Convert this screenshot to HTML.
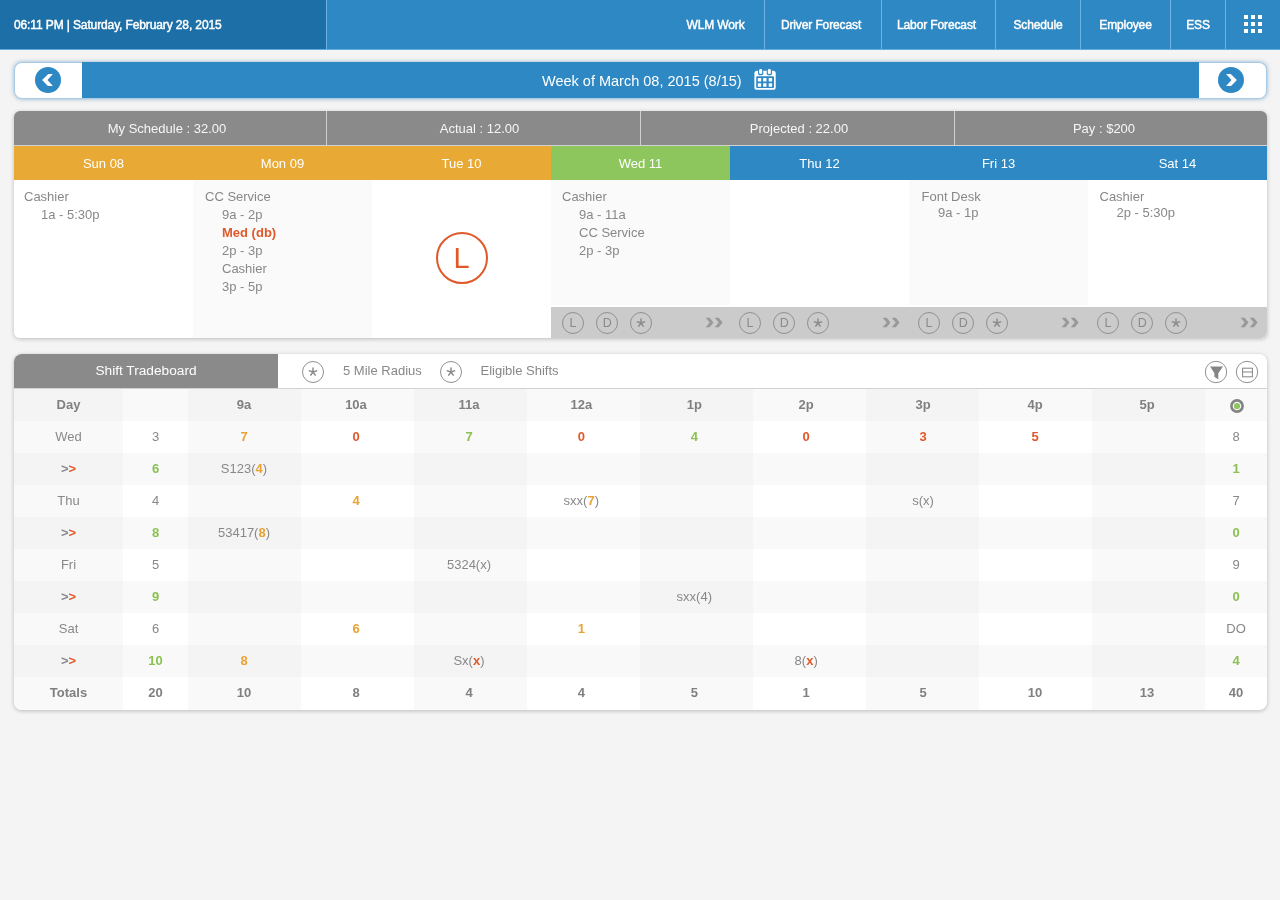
<!DOCTYPE html>
<html><head><meta charset="utf-8">
<style>
*{margin:0;padding:0;box-sizing:border-box}
html,body{width:1280px;height:900px;overflow:hidden;background:#f4f4f4;font-family:"Liberation Sans",sans-serif;font-size:13px;color:#888}
.a{position:absolute}
#hdr{left:0;top:0;width:1280px;height:50px;background:#2e88c4;border-bottom:1px solid #62ace0}
#hdrl{left:0;top:0;width:326px;height:49px;background:#1c6fa7;color:#fff;font-size:12px;line-height:51px;padding-left:14px;letter-spacing:-0.12px;-webkit-text-stroke:0.45px #fff}
.sep{top:0;width:1px;height:49px;background:#6db3e3}
.nav{top:0;height:49px;line-height:51px;color:#fff;font-size:12px;text-align:center;-webkit-text-stroke:0.45px #fff;letter-spacing:-0.12px}
#week{left:14px;top:61.5px;width:1253px;height:37px;background:#fff;border:1px solid #a9cbe6;border-radius:8px;box-shadow:0 0 4px rgba(40,110,170,.5)}
#weekc{left:82px;top:62px;width:1117px;height:36px;background:#2e88c4;color:#fff;font-size:14.5px;line-height:37px}
#sched{left:14px;top:111px;width:1253px;height:227px;background:#fff;border-radius:6px;box-shadow:0 1px 4px rgba(0,0,0,.24);overflow:hidden}
.sum{top:0;height:34px;line-height:34px;background:#8a8a8a;color:#f6f6f6;text-align:center}
.st{top:0;width:200px;height:34px;line-height:36px;color:#f6f6f6;text-align:center}
.dh{top:35px;height:34px;line-height:36px;color:#fff;text-align:center;width:179px}
.dc{top:69px;height:158px;width:179px}
.ln{position:absolute;white-space:nowrap;line-height:18px;margin-top:1px}
#trade{left:14px;top:354px;width:1253px;height:356px;background:#fff;border-radius:8px;box-shadow:0 1px 4px rgba(0,0,0,.24);overflow:hidden}
.row{position:absolute;left:0;width:1253px;height:32px}
.cell{position:absolute;top:0;height:32px;line-height:32px;text-align:center;white-space:nowrap}
.o{color:#e8a333;font-weight:bold}
.r{color:#e0592a;font-weight:bold}
.g{color:#8cc152;font-weight:bold}
.b{font-weight:bold;color:#808080}
</style></head><body><div style="position:absolute;left:0;top:0;width:1280px;height:900px;will-change:transform">
<div id="hdr" class="a"></div>
<div id="hdrl" class="a">06:11 PM | Saturday, February 28, 2015</div>
<div class="a sep" style="left:326px"></div>
<div class="a nav" style="left:667px;width:97px">WLM Work</div>
<div class="a sep" style="left:764px"></div>
<div class="a nav" style="left:763px;width:116px">Driver Forecast</div>
<div class="a sep" style="left:881px"></div>
<div class="a nav" style="left:880px;width:113px">Labor Forecast</div>
<div class="a sep" style="left:995px"></div>
<div class="a nav" style="left:996px;width:84px">Schedule</div>
<div class="a sep" style="left:1080px"></div>
<div class="a nav" style="left:1081px;width:89px">Employee</div>
<div class="a sep" style="left:1170px"></div>
<div class="a nav" style="left:1171px;width:54px">ESS</div>
<div class="a sep" style="left:1225px"></div>
<svg class="a" style="left:1244px;top:15px" width="18" height="18" viewBox="0 0 18 18"><g fill="#fff"><rect x="0" y="0" width="4" height="4"/><rect x="7" y="0" width="4" height="4"/><rect x="14" y="0" width="4" height="4"/><rect x="0" y="7" width="4" height="4"/><rect x="7" y="7" width="4" height="4"/><rect x="14" y="7" width="4" height="4"/><rect x="0" y="14" width="4" height="4"/><rect x="7" y="14" width="4" height="4"/><rect x="14" y="14" width="4" height="4"/></g></svg>

<div id="week" class="a"></div>
<div id="weekc" class="a"><span class="a" style="left:460px;top:1px">Week of March 08, 2015 (8/15)</span></div>
<svg class="a" style="left:35.3px;top:67.3px" width="26" height="26" viewBox="0 0 26 26"><circle cx="13" cy="13" r="13" fill="#2e88c4"/><polygon points="13.3,7.1 17.9,7.1 12.5,13 17.9,18.9 12.9,18.9 7.1,13" fill="#fff"/></svg>
<svg class="a" style="left:1218px;top:67px" width="26" height="26" viewBox="0 0 26 26"><circle cx="13" cy="13" r="13" fill="#2e88c4"/><polygon points="12.7,7.1 8.1,7.1 13.5,13 8.1,18.9 13.1,18.9 18.9,13" fill="#fff"/></svg>
<svg class="a" style="left:754px;top:68px" width="22" height="22" viewBox="0 0 22 22">
<rect x="0.4" y="2.7" width="21.3" height="19.1" rx="2.6" fill="#fff"/>
<rect x="4" y="0" width="5.3" height="7.2" rx="1.6" fill="#2e88c4"/><rect x="12.7" y="0" width="5.3" height="7.2" rx="1.6" fill="#2e88c4"/>
<rect x="5.1" y="1" width="3.1" height="5.1" rx="1.4" fill="#fff"/><rect x="13.8" y="1" width="3.1" height="5.1" rx="1.4" fill="#fff"/>
<rect x="2.2" y="8.2" width="17.8" height="11.8" rx="1" fill="#2e88c4"/>
<g fill="#fff"><rect x="3.8" y="10" width="3.4" height="3.4" rx=".5"/><rect x="9.1" y="10" width="3.4" height="3.4" rx=".5"/><rect x="14.7" y="10" width="3.4" height="3.4" rx=".5"/>
<rect x="3.8" y="15.3" width="3.4" height="3.4" rx=".5"/><rect x="9.1" y="15.3" width="3.4" height="3.4" rx=".5"/><rect x="14.7" y="15.3" width="3.4" height="3.4" rx=".5"/></g></svg>

<div id="sched" class="a">
  <div class="a" style="left:0;top:34px;width:1253px;height:1px;background:#d2d2d2"></div>
  <div class="a sum" style="left:0;width:1253px"></div>
  <div class="a" style="left:312px;top:0;width:1px;height:34px;background:#d0d0d0"></div>
  <div class="a" style="left:626px;top:0;width:1px;height:34px;background:#d0d0d0"></div>
  <div class="a" style="left:940px;top:0;width:1px;height:34px;background:#d0d0d0"></div>
  <div class="a st" style="left:53px">My Schedule : 32.00</div>
  <div class="a st" style="left:365.5px">Actual : 12.00</div>
  <div class="a st" style="left:685px">Projected : 22.00</div>
  <div class="a st" style="left:990px">Pay : $200</div>

  <div class="a dh" style="left:0;background:#e8a935">Sun 08</div>
  <div class="a dh" style="left:179px;background:#e8a935">Mon 09</div>
  <div class="a dh" style="left:358px;background:#e8a935">Tue 10</div>
  <div class="a dh" style="left:537px;background:#8cc65d">Wed 11</div>
  <div class="a dh" style="left:716px;background:#2e88c4">Thu 12</div>
  <div class="a dh" style="left:895px;background:#2e88c4">Fri 13</div>
  <div class="a dh" style="left:1074px;background:#2e88c4">Sat 14</div>

  <div class="a dc" style="left:0;background:#fff">
    <div class="ln" style="left:10px;top:7px">Cashier</div>
    <div class="ln" style="left:27px;top:25px">1a - 5:30p</div>
  </div>
  <div class="a dc" style="left:179px;background:#fafafa">
    <div class="ln" style="left:12px;top:7px">CC Service</div>
    <div class="ln" style="left:29px;top:25px">9a - 2p</div>
    <div class="ln" style="left:29px;top:43px;color:#e0592a;font-weight:bold">Med (db)</div>
    <div class="ln" style="left:29px;top:61px">2p - 3p</div>
    <div class="ln" style="left:29px;top:79px">Cashier</div>
    <div class="ln" style="left:29px;top:97px">3p - 5p</div>
  </div>
  <div class="a dc" style="left:358px;background:#fff">
    <div class="a" style="left:63.5px;top:52px;width:52px;height:52px;border:2px solid #e0592a;border-radius:50%;color:#e0592a;font-size:29px;line-height:48px;text-align:center">L</div>
  </div>
  <div class="a dc" style="left:537px;background:#fafafa">
    <div class="ln" style="left:11px;top:7px">Cashier</div>
    <div class="ln" style="left:28px;top:25px">9a - 11a</div>
    <div class="ln" style="left:28px;top:43px">CC Service</div>
    <div class="ln" style="left:28px;top:61px">2p - 3p</div>
  </div>
  <div class="a dc" style="left:716px;background:#fff"></div>
  <div class="a dc" style="left:895px;background:#fafafa">
    <div class="ln" style="left:12.5px;top:7px">Font Desk</div>
    <div class="ln" style="left:29px;top:23px">9a - 1p</div>
  </div>
  <div class="a dc" style="left:1074px;background:#fff">
    <div class="ln" style="left:11.5px;top:7px">Cashier</div>
    <div class="ln" style="left:28.5px;top:23px">2p - 5:30p</div>
  </div>
  <div class="a" style="left:537px;top:194px;width:716px;height:2px;background:#fff"></div>
  <div id="bar" class="a" style="left:537px;top:196px;width:716px;height:31px;background:#cbcbcb"></div>
<svg class="a" style="left:547.0px;top:199.5px" width="24" height="24" viewBox="0 0 24 24"><circle cx="12" cy="12" r="10.5" fill="none" stroke="#909090" stroke-width="1"/><text x="12" y="16.4" text-anchor="middle" font-family="Liberation Sans" font-size="12.5" fill="#8a8a8a">L</text></svg>
<svg class="a" style="left:581.1px;top:199.5px" width="24" height="24" viewBox="0 0 24 24"><circle cx="12" cy="12" r="10.5" fill="none" stroke="#909090" stroke-width="1"/><text x="12.2" y="16.4" text-anchor="middle" font-family="Liberation Sans" font-size="12.5" fill="#8a8a8a">D</text></svg>
<svg class="a" style="left:615.1px;top:199.5px" width="24" height="24" viewBox="0 0 24 24"><circle cx="12" cy="12" r="10.5" fill="none" stroke="#909090" stroke-width="1"/><g stroke="#8a8a8a" stroke-width="1.5" stroke-linecap="butt"><line x1="12" y1="7.5" x2="12" y2="12"/><line x1="7.8" y1="10.6" x2="12" y2="12"/><line x1="16.2" y1="10.6" x2="12" y2="12"/><line x1="9.4" y1="15.6" x2="12" y2="12"/><line x1="14.6" y1="15.6" x2="12" y2="12"/></g></svg>
<svg class="a" style="left:691.3px;top:206px" width="18" height="11" viewBox="0 0 18 11"><g fill="#999"><polygon points="0.6,0.8 4.7,0.8 8.45,5.5 4.7,10.2 0.6,10.2 4.7,5.5"/><polygon points="9.7,0.8 13.8,0.8 17.55,5.5 13.8,10.2 9.7,10.2 13.8,5.5"/></g></svg>
<svg class="a" style="left:724.2px;top:199.5px" width="24" height="24" viewBox="0 0 24 24"><circle cx="12" cy="12" r="10.5" fill="none" stroke="#909090" stroke-width="1"/><text x="12" y="16.4" text-anchor="middle" font-family="Liberation Sans" font-size="12.5" fill="#8a8a8a">L</text></svg>
<svg class="a" style="left:758.2px;top:199.5px" width="24" height="24" viewBox="0 0 24 24"><circle cx="12" cy="12" r="10.5" fill="none" stroke="#909090" stroke-width="1"/><text x="12.2" y="16.4" text-anchor="middle" font-family="Liberation Sans" font-size="12.5" fill="#8a8a8a">D</text></svg>
<svg class="a" style="left:792.2px;top:199.5px" width="24" height="24" viewBox="0 0 24 24"><circle cx="12" cy="12" r="10.5" fill="none" stroke="#909090" stroke-width="1"/><g stroke="#8a8a8a" stroke-width="1.5" stroke-linecap="butt"><line x1="12" y1="7.5" x2="12" y2="12"/><line x1="7.8" y1="10.6" x2="12" y2="12"/><line x1="16.2" y1="10.6" x2="12" y2="12"/><line x1="9.4" y1="15.6" x2="12" y2="12"/><line x1="14.6" y1="15.6" x2="12" y2="12"/></g></svg>
<svg class="a" style="left:868.3px;top:206px" width="18" height="11" viewBox="0 0 18 11"><g fill="#999"><polygon points="0.6,0.8 4.7,0.8 8.45,5.5 4.7,10.2 0.6,10.2 4.7,5.5"/><polygon points="9.7,0.8 13.8,0.8 17.55,5.5 13.8,10.2 9.7,10.2 13.8,5.5"/></g></svg>
<svg class="a" style="left:903.0px;top:199.5px" width="24" height="24" viewBox="0 0 24 24"><circle cx="12" cy="12" r="10.5" fill="none" stroke="#909090" stroke-width="1"/><text x="12" y="16.4" text-anchor="middle" font-family="Liberation Sans" font-size="12.5" fill="#8a8a8a">L</text></svg>
<svg class="a" style="left:937.0px;top:199.5px" width="24" height="24" viewBox="0 0 24 24"><circle cx="12" cy="12" r="10.5" fill="none" stroke="#909090" stroke-width="1"/><text x="12.2" y="16.4" text-anchor="middle" font-family="Liberation Sans" font-size="12.5" fill="#8a8a8a">D</text></svg>
<svg class="a" style="left:971.0px;top:199.5px" width="24" height="24" viewBox="0 0 24 24"><circle cx="12" cy="12" r="10.5" fill="none" stroke="#909090" stroke-width="1"/><g stroke="#8a8a8a" stroke-width="1.5" stroke-linecap="butt"><line x1="12" y1="7.5" x2="12" y2="12"/><line x1="7.8" y1="10.6" x2="12" y2="12"/><line x1="16.2" y1="10.6" x2="12" y2="12"/><line x1="9.4" y1="15.6" x2="12" y2="12"/><line x1="14.6" y1="15.6" x2="12" y2="12"/></g></svg>
<svg class="a" style="left:1047.3px;top:206px" width="18" height="11" viewBox="0 0 18 11"><g fill="#999"><polygon points="0.6,0.8 4.7,0.8 8.45,5.5 4.7,10.2 0.6,10.2 4.7,5.5"/><polygon points="9.7,0.8 13.8,0.8 17.55,5.5 13.8,10.2 9.7,10.2 13.8,5.5"/></g></svg>
<svg class="a" style="left:1082.2px;top:199.5px" width="24" height="24" viewBox="0 0 24 24"><circle cx="12" cy="12" r="10.5" fill="none" stroke="#909090" stroke-width="1"/><text x="12" y="16.4" text-anchor="middle" font-family="Liberation Sans" font-size="12.5" fill="#8a8a8a">L</text></svg>
<svg class="a" style="left:1116.2px;top:199.5px" width="24" height="24" viewBox="0 0 24 24"><circle cx="12" cy="12" r="10.5" fill="none" stroke="#909090" stroke-width="1"/><text x="12.2" y="16.4" text-anchor="middle" font-family="Liberation Sans" font-size="12.5" fill="#8a8a8a">D</text></svg>
<svg class="a" style="left:1150.2px;top:199.5px" width="24" height="24" viewBox="0 0 24 24"><circle cx="12" cy="12" r="10.5" fill="none" stroke="#909090" stroke-width="1"/><g stroke="#8a8a8a" stroke-width="1.5" stroke-linecap="butt"><line x1="12" y1="7.5" x2="12" y2="12"/><line x1="7.8" y1="10.6" x2="12" y2="12"/><line x1="16.2" y1="10.6" x2="12" y2="12"/><line x1="9.4" y1="15.6" x2="12" y2="12"/><line x1="14.6" y1="15.6" x2="12" y2="12"/></g></svg>
<svg class="a" style="left:1226.3px;top:206px" width="18" height="11" viewBox="0 0 18 11"><g fill="#999"><polygon points="0.6,0.8 4.7,0.8 8.45,5.5 4.7,10.2 0.6,10.2 4.7,5.5"/><polygon points="9.7,0.8 13.8,0.8 17.55,5.5 13.8,10.2 9.7,10.2 13.8,5.5"/></g></svg>

</div>

<div id="trade" class="a">
<div class="a" style="left:0px;top:35px;width:109px;height:32px;background:#f4f4f4"></div>
<div class="a" style="left:109px;top:35px;width:65px;height:32px;background:#f9f9f9"></div>
<div class="a" style="left:174px;top:35px;width:113px;height:32px;background:#f4f4f4"></div>
<div class="a" style="left:287px;top:35px;width:113px;height:32px;background:#f9f9f9"></div>
<div class="a" style="left:400px;top:35px;width:113px;height:32px;background:#f4f4f4"></div>
<div class="a" style="left:513px;top:35px;width:113px;height:32px;background:#f9f9f9"></div>
<div class="a" style="left:626px;top:35px;width:113px;height:32px;background:#f4f4f4"></div>
<div class="a" style="left:739px;top:35px;width:113px;height:32px;background:#f9f9f9"></div>
<div class="a" style="left:852px;top:35px;width:113px;height:32px;background:#f4f4f4"></div>
<div class="a" style="left:965px;top:35px;width:113px;height:32px;background:#f9f9f9"></div>
<div class="a" style="left:1078px;top:35px;width:113px;height:32px;background:#f4f4f4"></div>
<div class="a" style="left:1191px;top:35px;width:62px;height:32px;background:#f9f9f9"></div>
<div class="a" style="left:0px;top:67px;width:109px;height:32px;background:#f9f9f9"></div>
<div class="a" style="left:174px;top:67px;width:113px;height:32px;background:#f9f9f9"></div>
<div class="a" style="left:400px;top:67px;width:113px;height:32px;background:#f9f9f9"></div>
<div class="a" style="left:626px;top:67px;width:113px;height:32px;background:#f9f9f9"></div>
<div class="a" style="left:852px;top:67px;width:113px;height:32px;background:#f9f9f9"></div>
<div class="a" style="left:1078px;top:67px;width:113px;height:32px;background:#f9f9f9"></div>
<div class="a" style="left:0px;top:99px;width:109px;height:32px;background:#f4f4f4"></div>
<div class="a" style="left:109px;top:99px;width:65px;height:32px;background:#f9f9f9"></div>
<div class="a" style="left:174px;top:99px;width:113px;height:32px;background:#f4f4f4"></div>
<div class="a" style="left:287px;top:99px;width:113px;height:32px;background:#f9f9f9"></div>
<div class="a" style="left:400px;top:99px;width:113px;height:32px;background:#f4f4f4"></div>
<div class="a" style="left:513px;top:99px;width:113px;height:32px;background:#f9f9f9"></div>
<div class="a" style="left:626px;top:99px;width:113px;height:32px;background:#f4f4f4"></div>
<div class="a" style="left:739px;top:99px;width:113px;height:32px;background:#f9f9f9"></div>
<div class="a" style="left:852px;top:99px;width:113px;height:32px;background:#f4f4f4"></div>
<div class="a" style="left:965px;top:99px;width:113px;height:32px;background:#f9f9f9"></div>
<div class="a" style="left:1078px;top:99px;width:113px;height:32px;background:#f4f4f4"></div>
<div class="a" style="left:1191px;top:99px;width:62px;height:32px;background:#f9f9f9"></div>
<div class="a" style="left:0px;top:131px;width:109px;height:32px;background:#f9f9f9"></div>
<div class="a" style="left:174px;top:131px;width:113px;height:32px;background:#f9f9f9"></div>
<div class="a" style="left:400px;top:131px;width:113px;height:32px;background:#f9f9f9"></div>
<div class="a" style="left:626px;top:131px;width:113px;height:32px;background:#f9f9f9"></div>
<div class="a" style="left:852px;top:131px;width:113px;height:32px;background:#f9f9f9"></div>
<div class="a" style="left:1078px;top:131px;width:113px;height:32px;background:#f9f9f9"></div>
<div class="a" style="left:0px;top:163px;width:109px;height:32px;background:#f4f4f4"></div>
<div class="a" style="left:109px;top:163px;width:65px;height:32px;background:#f9f9f9"></div>
<div class="a" style="left:174px;top:163px;width:113px;height:32px;background:#f4f4f4"></div>
<div class="a" style="left:287px;top:163px;width:113px;height:32px;background:#f9f9f9"></div>
<div class="a" style="left:400px;top:163px;width:113px;height:32px;background:#f4f4f4"></div>
<div class="a" style="left:513px;top:163px;width:113px;height:32px;background:#f9f9f9"></div>
<div class="a" style="left:626px;top:163px;width:113px;height:32px;background:#f4f4f4"></div>
<div class="a" style="left:739px;top:163px;width:113px;height:32px;background:#f9f9f9"></div>
<div class="a" style="left:852px;top:163px;width:113px;height:32px;background:#f4f4f4"></div>
<div class="a" style="left:965px;top:163px;width:113px;height:32px;background:#f9f9f9"></div>
<div class="a" style="left:1078px;top:163px;width:113px;height:32px;background:#f4f4f4"></div>
<div class="a" style="left:1191px;top:163px;width:62px;height:32px;background:#f9f9f9"></div>
<div class="a" style="left:0px;top:195px;width:109px;height:32px;background:#f9f9f9"></div>
<div class="a" style="left:174px;top:195px;width:113px;height:32px;background:#f9f9f9"></div>
<div class="a" style="left:400px;top:195px;width:113px;height:32px;background:#f9f9f9"></div>
<div class="a" style="left:626px;top:195px;width:113px;height:32px;background:#f9f9f9"></div>
<div class="a" style="left:852px;top:195px;width:113px;height:32px;background:#f9f9f9"></div>
<div class="a" style="left:1078px;top:195px;width:113px;height:32px;background:#f9f9f9"></div>
<div class="a" style="left:0px;top:227px;width:109px;height:32px;background:#f4f4f4"></div>
<div class="a" style="left:109px;top:227px;width:65px;height:32px;background:#f9f9f9"></div>
<div class="a" style="left:174px;top:227px;width:113px;height:32px;background:#f4f4f4"></div>
<div class="a" style="left:287px;top:227px;width:113px;height:32px;background:#f9f9f9"></div>
<div class="a" style="left:400px;top:227px;width:113px;height:32px;background:#f4f4f4"></div>
<div class="a" style="left:513px;top:227px;width:113px;height:32px;background:#f9f9f9"></div>
<div class="a" style="left:626px;top:227px;width:113px;height:32px;background:#f4f4f4"></div>
<div class="a" style="left:739px;top:227px;width:113px;height:32px;background:#f9f9f9"></div>
<div class="a" style="left:852px;top:227px;width:113px;height:32px;background:#f4f4f4"></div>
<div class="a" style="left:965px;top:227px;width:113px;height:32px;background:#f9f9f9"></div>
<div class="a" style="left:1078px;top:227px;width:113px;height:32px;background:#f4f4f4"></div>
<div class="a" style="left:1191px;top:227px;width:62px;height:32px;background:#f9f9f9"></div>
<div class="a" style="left:0px;top:259px;width:109px;height:32px;background:#f9f9f9"></div>
<div class="a" style="left:174px;top:259px;width:113px;height:32px;background:#f9f9f9"></div>
<div class="a" style="left:400px;top:259px;width:113px;height:32px;background:#f9f9f9"></div>
<div class="a" style="left:626px;top:259px;width:113px;height:32px;background:#f9f9f9"></div>
<div class="a" style="left:852px;top:259px;width:113px;height:32px;background:#f9f9f9"></div>
<div class="a" style="left:1078px;top:259px;width:113px;height:32px;background:#f9f9f9"></div>
<div class="a" style="left:0px;top:291px;width:109px;height:32px;background:#f4f4f4"></div>
<div class="a" style="left:109px;top:291px;width:65px;height:32px;background:#f9f9f9"></div>
<div class="a" style="left:174px;top:291px;width:113px;height:32px;background:#f4f4f4"></div>
<div class="a" style="left:287px;top:291px;width:113px;height:32px;background:#f9f9f9"></div>
<div class="a" style="left:400px;top:291px;width:113px;height:32px;background:#f4f4f4"></div>
<div class="a" style="left:513px;top:291px;width:113px;height:32px;background:#f9f9f9"></div>
<div class="a" style="left:626px;top:291px;width:113px;height:32px;background:#f4f4f4"></div>
<div class="a" style="left:739px;top:291px;width:113px;height:32px;background:#f9f9f9"></div>
<div class="a" style="left:852px;top:291px;width:113px;height:32px;background:#f4f4f4"></div>
<div class="a" style="left:965px;top:291px;width:113px;height:32px;background:#f9f9f9"></div>
<div class="a" style="left:1078px;top:291px;width:113px;height:32px;background:#f4f4f4"></div>
<div class="a" style="left:1191px;top:291px;width:62px;height:32px;background:#f9f9f9"></div>
<div class="a" style="left:0px;top:323px;width:109px;height:34px;background:#f9f9f9"></div>
<div class="a" style="left:174px;top:323px;width:113px;height:34px;background:#f9f9f9"></div>
<div class="a" style="left:400px;top:323px;width:113px;height:34px;background:#f9f9f9"></div>
<div class="a" style="left:626px;top:323px;width:113px;height:34px;background:#f9f9f9"></div>
<div class="a" style="left:852px;top:323px;width:113px;height:34px;background:#f9f9f9"></div>
<div class="a" style="left:1078px;top:323px;width:113px;height:34px;background:#f9f9f9"></div>
<div class="cell" style="left:0px;top:35px;width:109px"><span class=b>Day</span></div>
<div class="cell" style="left:173.5px;top:35px;width:113px"><span class=b>9a</span></div>
<div class="cell" style="left:285.5px;top:35px;width:113px"><span class=b>10a</span></div>
<div class="cell" style="left:398.5px;top:35px;width:113px"><span class=b>11a</span></div>
<div class="cell" style="left:510.8px;top:35px;width:113px"><span class=b>12a</span></div>
<div class="cell" style="left:623.8px;top:35px;width:113px"><span class=b>1p</span></div>
<div class="cell" style="left:735.7px;top:35px;width:113px"><span class=b>2p</span></div>
<div class="cell" style="left:852.6px;top:35px;width:113px"><span class=b>3p</span></div>
<div class="cell" style="left:964.5px;top:35px;width:113px"><span class=b>4p</span></div>
<div class="cell" style="left:1076.5px;top:35px;width:113px"><span class=b>5p</span></div>
<div class="cell" style="left:1191px;top:35px;width:62px"><svg width="14" height="14" viewBox="0 0 14 14" style="vertical-align:middle;margin-top:0px;margin-left:2px"><circle cx="7" cy="7" r="5.6" fill="none" stroke="#828282" stroke-width="2.6"/><circle cx="7" cy="7" r="3.1" fill="#8cc65d"/></svg></div>
<div class="cell" style="left:0px;top:67px;width:109px">Wed</div>
<div class="cell" style="left:109px;top:67px;width:65px">3</div>
<div class="cell" style="left:173.5px;top:67px;width:113px"><span class=o>7</span></div>
<div class="cell" style="left:285.5px;top:67px;width:113px"><span class=r>0</span></div>
<div class="cell" style="left:398.5px;top:67px;width:113px"><span class=g>7</span></div>
<div class="cell" style="left:510.8px;top:67px;width:113px"><span class=r>0</span></div>
<div class="cell" style="left:623.8px;top:67px;width:113px"><span class=g>4</span></div>
<div class="cell" style="left:735.7px;top:67px;width:113px"><span class=r>0</span></div>
<div class="cell" style="left:852.6px;top:67px;width:113px"><span class=r>3</span></div>
<div class="cell" style="left:964.5px;top:67px;width:113px"><span class=r>5</span></div>
<div class="cell" style="left:1191px;top:67px;width:62px">8</div>
<div class="cell" style="left:0px;top:99px;width:109px"><span class=b style="color:#888">&gt;</span><span class=r>&gt;</span></div>
<div class="cell" style="left:109px;top:99px;width:65px"><span class=g>6</span></div>
<div class="cell" style="left:173.5px;top:99px;width:113px">S123(<span class=o>4</span>)</div>
<div class="cell" style="left:1191px;top:99px;width:62px"><span class=g>1</span></div>
<div class="cell" style="left:0px;top:131px;width:109px">Thu</div>
<div class="cell" style="left:109px;top:131px;width:65px">4</div>
<div class="cell" style="left:285.5px;top:131px;width:113px"><span class=o>4</span></div>
<div class="cell" style="left:510.8px;top:131px;width:113px">sxx(<span class=o>7</span>)</div>
<div class="cell" style="left:852.6px;top:131px;width:113px">s(x)</div>
<div class="cell" style="left:1191px;top:131px;width:62px">7</div>
<div class="cell" style="left:0px;top:163px;width:109px"><span class=b style="color:#888">&gt;</span><span class=r>&gt;</span></div>
<div class="cell" style="left:109px;top:163px;width:65px"><span class=g>8</span></div>
<div class="cell" style="left:173.5px;top:163px;width:113px">53417(<span class=o>8</span>)</div>
<div class="cell" style="left:1191px;top:163px;width:62px"><span class=g>0</span></div>
<div class="cell" style="left:0px;top:195px;width:109px">Fri</div>
<div class="cell" style="left:109px;top:195px;width:65px">5</div>
<div class="cell" style="left:398.5px;top:195px;width:113px">5324(x)</div>
<div class="cell" style="left:1191px;top:195px;width:62px">9</div>
<div class="cell" style="left:0px;top:227px;width:109px"><span class=b style="color:#888">&gt;</span><span class=r>&gt;</span></div>
<div class="cell" style="left:109px;top:227px;width:65px"><span class=g>9</span></div>
<div class="cell" style="left:623.8px;top:227px;width:113px">sxx(4)</div>
<div class="cell" style="left:1191px;top:227px;width:62px"><span class=g>0</span></div>
<div class="cell" style="left:0px;top:259px;width:109px">Sat</div>
<div class="cell" style="left:109px;top:259px;width:65px">6</div>
<div class="cell" style="left:285.5px;top:259px;width:113px"><span class=o>6</span></div>
<div class="cell" style="left:510.8px;top:259px;width:113px"><span class=o>1</span></div>
<div class="cell" style="left:1191px;top:259px;width:62px">DO</div>
<div class="cell" style="left:0px;top:291px;width:109px"><span class=b style="color:#888">&gt;</span><span class=r>&gt;</span></div>
<div class="cell" style="left:109px;top:291px;width:65px"><span class=g>10</span></div>
<div class="cell" style="left:173.5px;top:291px;width:113px"><span class=o>8</span></div>
<div class="cell" style="left:398.5px;top:291px;width:113px">Sx(<span class=r>x</span>)</div>
<div class="cell" style="left:735.7px;top:291px;width:113px">8(<span class=r>x</span>)</div>
<div class="cell" style="left:1191px;top:291px;width:62px"><span class=g>4</span></div>
<div class="cell" style="left:0px;top:323px;width:109px"><span class=b>Totals</span></div>
<div class="cell" style="left:109px;top:323px;width:65px"><span class=b>20</span></div>
<div class="cell" style="left:173.5px;top:323px;width:113px"><span class=b>10</span></div>
<div class="cell" style="left:285.5px;top:323px;width:113px"><span class=b>8</span></div>
<div class="cell" style="left:398.5px;top:323px;width:113px"><span class=b>4</span></div>
<div class="cell" style="left:510.8px;top:323px;width:113px"><span class=b>4</span></div>
<div class="cell" style="left:623.8px;top:323px;width:113px"><span class=b>5</span></div>
<div class="cell" style="left:735.7px;top:323px;width:113px"><span class=b>1</span></div>
<div class="cell" style="left:852.6px;top:323px;width:113px"><span class=b>5</span></div>
<div class="cell" style="left:964.5px;top:323px;width:113px"><span class=b>10</span></div>
<div class="cell" style="left:1076.5px;top:323px;width:113px"><span class=b>13</span></div>
<div class="cell" style="left:1191px;top:323px;width:62px"><span class=b>40</span></div>

<div class="a" style="left:0;top:0;width:264px;height:34px;background:#8a8a8a;color:#fff;text-align:center;line-height:34px;font-size:13.7px">Shift Tradeboard</div>
<div class="a" style="left:0;top:34px;width:1253px;height:1px;background:#d2d2d2"></div>
<svg class="a" style="left:287px;top:5.5px" width="24" height="24" viewBox="0 0 24 24"><circle cx="12" cy="12" r="10.5" fill="none" stroke="#909090" stroke-width="1"/><g stroke="#8a8a8a" stroke-width="1.5"><line x1="12" y1="7.5" x2="12" y2="12"/><line x1="7.8" y1="10.6" x2="12" y2="12"/><line x1="16.2" y1="10.6" x2="12" y2="12"/><line x1="9.4" y1="15.6" x2="12" y2="12"/><line x1="14.6" y1="15.6" x2="12" y2="12"/></g></svg>
<div class="a" style="left:329px;top:0;line-height:34px">5 Mile Radius</div>
<svg class="a" style="left:425px;top:5.5px" width="24" height="24" viewBox="0 0 24 24"><circle cx="12" cy="12" r="10.5" fill="none" stroke="#909090" stroke-width="1"/><g stroke="#8a8a8a" stroke-width="1.5"><line x1="12" y1="7.5" x2="12" y2="12"/><line x1="7.8" y1="10.6" x2="12" y2="12"/><line x1="16.2" y1="10.6" x2="12" y2="12"/><line x1="9.4" y1="15.6" x2="12" y2="12"/><line x1="14.6" y1="15.6" x2="12" y2="12"/></g></svg>
<div class="a" style="left:466.5px;top:0;line-height:34px">Eligible Shifts</div>
<svg class="a" style="left:1190px;top:5.5px" width="24" height="24" viewBox="0 0 24 24"><circle cx="12" cy="12" r="10.7" fill="none" stroke="#909090" stroke-width="1"/><polygon points="6.1,6.5 19,6.5 14.3,13.2 14.3,19.4 10.4,16.7 10.4,13.2" fill="#858585"/></svg>
<svg class="a" style="left:1221px;top:5.5px" width="24" height="24" viewBox="0 0 24 24"><circle cx="12" cy="12" r="10.7" fill="none" stroke="#909090" stroke-width="1"/><rect x="7.6" y="8.2" width="9.8" height="8.6" fill="none" stroke="#858585" stroke-width="1"/><line x1="7.6" y1="12" x2="17.4" y2="12" stroke="#858585" stroke-width="1"/></svg>
</div>
</div></body></html>
